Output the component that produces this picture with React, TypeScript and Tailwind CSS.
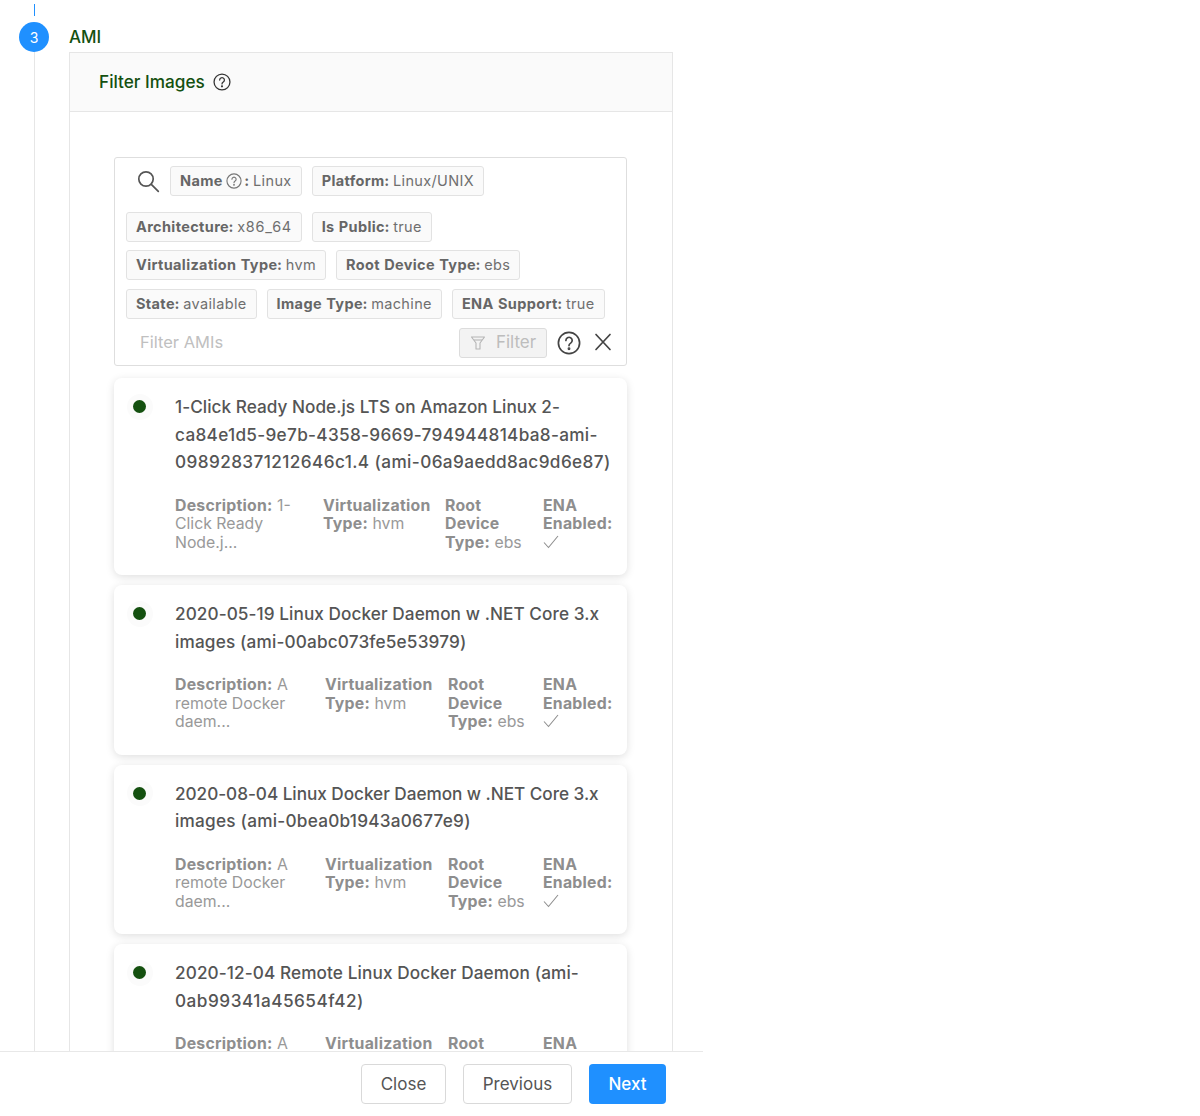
import React from "react";

const font = { fontFamily: "Inter, 'Liberation Sans', sans-serif" };

function Help({ size = 18, className = "" }: { size?: number; className?: string }) {
  return (
    <svg width={size} height={size} viewBox="0 0 24 24" fill="none" stroke="currentColor" strokeWidth="1.7" strokeLinecap="round" className={className}>
      <circle cx="12" cy="12" r="10.6" />
      <path d="M8.9 9.4a3.15 3.15 0 1 1 4.8 2.7c-1.1.7-1.7 1.3-1.7 2.5" />
      <circle cx="12" cy="17.8" r=".6" fill="currentColor" />
    </svg>
  );
}

function Tag({ label, value, help }: { label: string; value: string; help?: boolean }) {
  return (
    <span className="inline-flex items-center h-[30px] px-[9px] rounded-[3px] border border-[#e2e2e2] bg-[#fafafa] text-[14.5px] tracking-[0.36px] tabular-nums text-[#6f6f6f] whitespace-nowrap">
      <b className="font-bold text-[#666]">{label}</b>
      {help ? (
        <>
          <Help size={16} className="mx-[3px] text-[#777]" />
          <b className="font-bold text-[#666] mr-[4px]">:</b>
        </>
      ) : (
        <b className="font-bold text-[#666] mr-[4px]">:</b>
      )}
      {value}
    </span>
  );
}

type Ami = {
  title: { text: string; cls: string }[];
  desc: string[];
  widths: string;
  height: string;
};

const amis: Ami[] = [
  {
    title: [
      { text: "1-Click Ready Node.js LTS on Amazon Linux 2-", cls: "tracking-[0.03px]" },
      { text: "ca84e1d5-9e7b-4358-9669-794944814ba8-ami-", cls: "tracking-[0.3px]" },
      { text: "098928371212646c1.4 (ami-06a9aedd8ac9d6e87)", cls: "tracking-[0.4px]" },
    ],
    desc: ["1-", "Click Ready", "Node.j..."],
    widths: "grid-cols-[148px_122px_98px_1fr]",
    height: "h-[197px]",
  },
  {
    title: [
      { text: "2020-05-19 Linux Docker Daemon w .NET Core 3.x", cls: "tracking-[0.07px]" },
      { text: "images (ami-00abc073fe5e53979)", cls: "tracking-[0.16px]" },
    ],
    desc: ["A", "remote Docker", "daem..."],
    widths: "grid-cols-[150px_123px_95px_1fr]",
    height: "h-[169.5px]",
  },
  {
    title: [
      { text: "2020-08-04 Linux Docker Daemon w .NET Core 3.x", cls: "tracking-[-0.04px]" },
      { text: "images (ami-0bea0b1943a0677e9)", cls: "tracking-[0.24px]" },
    ],
    desc: ["A", "remote Docker", "daem..."],
    widths: "grid-cols-[150px_123px_95px_1fr]",
    height: "h-[169.5px]",
  },
  {
    title: [
      { text: "2020-12-04 Remote Linux Docker Daemon (ami-", cls: "tracking-[0.1px]" },
      { text: "0ab99341a45654f42)", cls: "tracking-[0.5px]" },
    ],
    desc: ["A", "remote Docker", "daem..."],
    widths: "grid-cols-[150px_123px_95px_1fr]",
    height: "h-[169.5px]",
  },
];

function Card({ a }: { a: Ami }) {
  const bold = "font-bold text-[#8e8e8e] tracking-[0.25px]";
  return (
    <div className={`${a.height} shrink-0 rounded-[8px] bg-white shadow-[0_2px_8px_rgba(0,0,0,0.13)] flex pt-[15px]`}>
      <div className="w-[61px] shrink-0 flex justify-center pt-[1.5px]">
        <span className="w-[26px] h-[26px] -mt-[1px] ml-[-10px] rounded-full bg-[#fbfbfb] flex items-center justify-center">
          <span className="w-[13px] h-[13px] rounded-full bg-[#14500f]" />
        </span>
      </div>
      <div className="flex-1 min-w-0">
        <div className="text-[17.2px] font-medium leading-[27.5px] text-[#555] whitespace-nowrap">
          {a.title.map((t) => (
            <div key={t.text} className={t.cls}>{t.text}</div>
          ))}
        </div>
        <div className={`mt-[21px] grid ${a.widths} text-[15.8px] leading-[18.5px] text-[#999]`}>
          <div>
            <b className={bold}>Description:</b> {a.desc[0]}
            <br />
            {a.desc[1]}
            <br />
            {a.desc[2]}
          </div>
          <div>
            <b className={bold}>
              Virtualization
              <br />
              Type:
            </b>{" "}
            hvm
          </div>
          <div>
            <b className={bold}>
              Root
              <br />
              Device
              <br />
              Type:
            </b>{" "}
            ebs
          </div>
          <div>
            <b className={bold}>
              ENA
              <br />
              Enabled:
            </b>
            <svg width="16" height="14" viewBox="0 0 16 14" fill="none" stroke="#8f8f8f" strokeWidth="1.1" className="mt-[1px]">
              <path d="M1 7.5l4.5 5L15 1" />
            </svg>
          </div>
        </div>
      </div>
    </div>
  );
}

export default function App() {
  return (
    <div style={font} className="w-[1200px] h-[1116px] bg-white flex flex-col overflow-hidden">
      <div className="w-[703px] h-[1051px] shrink-0 flex overflow-hidden">
        <div className="w-[69px] shrink-0 flex flex-col items-center pr-px">
          <div className="w-px h-[12px] mt-[4px] bg-[#1f90ff]" />
          <div className="mt-[6px] w-[30px] h-[30px] rounded-full bg-[#1f90ff] flex items-center justify-center text-white text-[14px]">3</div>
          <div className="w-px flex-1 bg-[#e6e6e6]" />
        </div>
        <div className="w-[604px] shrink-0 flex flex-col">
          <div className="h-[52px] shrink-0 pt-[27px] text-[17px] font-medium leading-[20px] text-[#14500f]">AMI</div>
          <div className="flex-1 min-h-0 border-x border-t border-[#e6e6e6] flex flex-col">
            <div className="h-[59px] shrink-0 bg-[#fafafa] border-b border-[#e6e6e6] flex items-center pl-[29px] gap-[8px] text-[17.2px] font-medium text-[#14500f]">
              <span>Filter Images</span>
              <Help size={18} className="text-[#333]" />
            </div>
            <div className="flex-1 min-h-0 pl-[44px] pr-[45px] pt-[45px] flex flex-col gap-[10px] overflow-hidden">
              <div className="h-[209px] shrink-0 rounded-[3px] border border-[#dedede] px-[11px] pt-[8px] mb-[2px]">
                <div className="flex items-center">
                  <svg width="24" height="24" viewBox="0 0 24 24" fill="none" stroke="#555" strokeWidth="1.7" strokeLinecap="round" className="ml-[10px] mr-[10px]">
                    <circle cx="10" cy="10" r="7.2" />
                    <path d="M15.3 15.3l7 7" />
                  </svg>
                  <div className="flex gap-[10px]">
                    <Tag label="Name" value="Linux" help />
                    <Tag label="Platform" value="Linux/UNIX" />
                  </div>
                </div>
                <div className="flex gap-[10px] mt-[16px]">
                  <Tag label="Architecture" value="x86_64" />
                  <Tag label="Is Public" value="true" />
                </div>
                <div className="flex gap-[10px] mt-[8px]">
                  <Tag label="Virtualization Type" value="hvm" />
                  <Tag label="Root Device Type" value="ebs" />
                </div>
                <div className="flex gap-[10px] mt-[8.5px]">
                  <Tag label="State" value="available" />
                  <Tag label="Image Type" value="machine" />
                  <Tag label="ENA Support" value="true" />
                </div>
                <div className="flex items-center mt-[9px]">
                  <span className="ml-[14px] flex-1 text-[16.5px] text-[#c0c0c0]">Filter AMIs</span>
                  <span className="h-[30px] w-[88px] rounded-[3px] border border-[#dcdcdc] bg-[#f3f3f3] flex items-center justify-center gap-[10px] text-[17px] text-[#bdbdbd]">
                    <svg width="16" height="16" viewBox="0 0 16 16" fill="none" stroke="#b5b5b5" strokeWidth="1.1" strokeLinejoin="round">
                      <path d="M1.5 2h13L10 8v6H6V8z" />
                      <path d="M4 5h8" />
                    </svg>
                    Filter
                  </span>
                  <Help size={24} className="ml-[10px] text-[#444]" />
                  <svg width="20" height="20" viewBox="0 0 20 20" fill="none" stroke="#444" strokeWidth="1.7" strokeLinecap="round" className="ml-[12px] mr-[2px] -mt-[1px]">
                    <path d="M3 2.5l14 15M17 2.5l-14 15" />
                  </svg>
                </div>
              </div>
              {amis.map((a) => (
                <Card key={a.title[0].text} a={a} />
              ))}
            </div>
          </div>
        </div>
      </div>
      <div className="w-[703px] flex-1 border-t border-[#e8e8e8] relative flex justify-end items-start pt-[12px] pr-[37px] gap-[17px] text-[17px]">
        <button className="h-[40px] w-[85px] pt-[1px] rounded-[4px] border border-[#d9d9d9] bg-white text-[#555]">Close</button>
        <button className="h-[40px] w-[109px] pt-[1px] rounded-[4px] border border-[#d9d9d9] bg-white text-[#555]">Previous</button>
        <button className="h-[40px] w-[77px] pt-[1px] rounded-[4px] bg-[#1f90ff] font-medium text-white">Next</button>
      </div>
    </div>
  );
}
